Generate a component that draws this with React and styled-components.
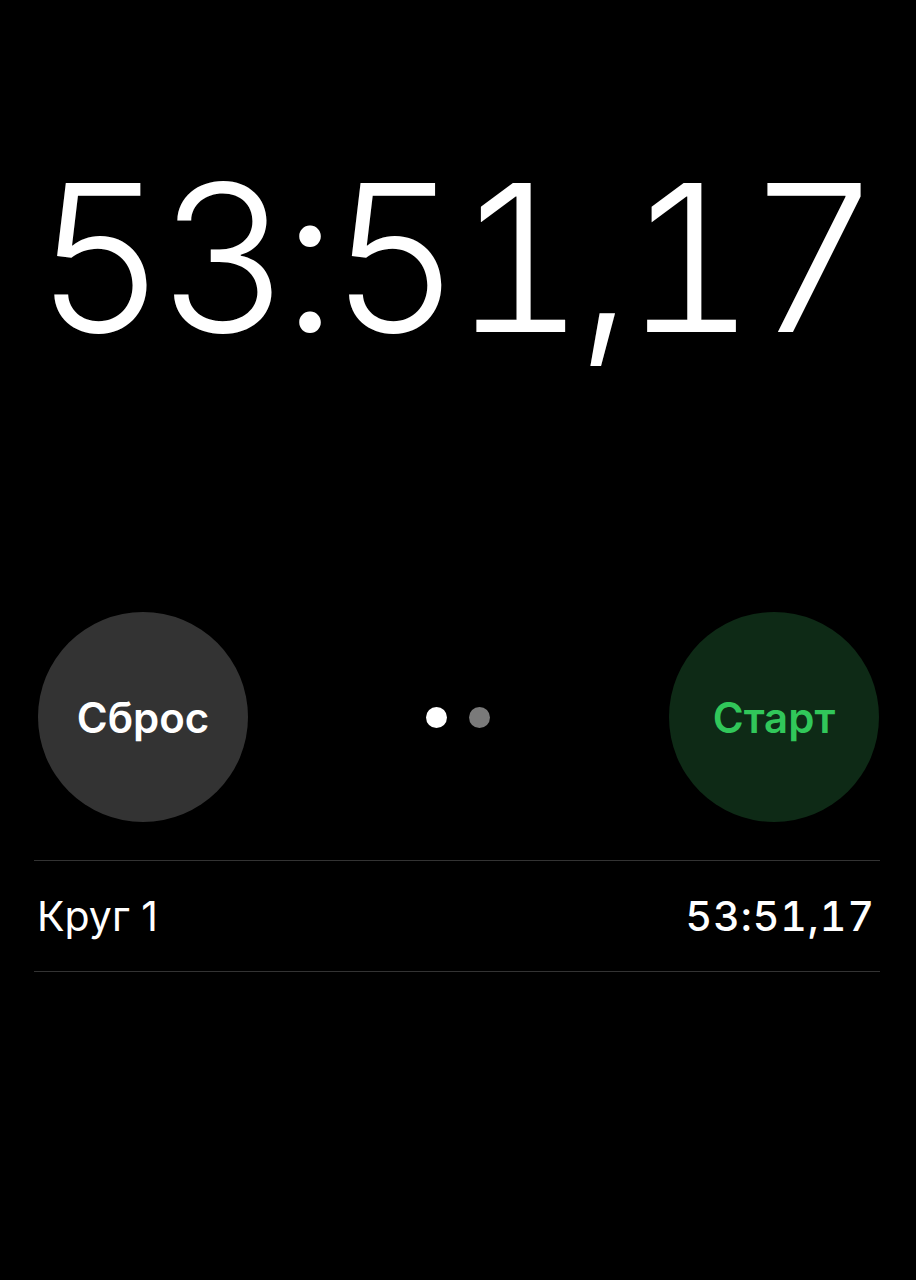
import React from 'react'
import styled, { createGlobalStyle } from 'styled-components'

const GlobalStyle = createGlobalStyle`
    html, body {
        margin: 0;
        padding: 0;
        background: #000;
    }
    body {
        font-family: Inter, "Noto Sans", "Liberation Sans", sans-serif;
        color: #fff;
    }
`

const Screen = styled.div`
    width: 916px;
    height: 1280px;
    box-sizing: border-box;
    padding: 155px 36px 0 34px;
    background: #000;
    display: flex;
    flex-direction: column;
`

const BigTime = styled.div`
    font-size: 205px;
    line-height: 1;
    font-weight: 280;
    font-variant-numeric: tabular-nums;
    text-align: center;
    letter-spacing: -8.5px;
    height: 205px;
    white-space: nowrap;
    margin-right: 8px;
`

const Controls = styled.div`
    margin-top: 252px;
    padding: 0 1px 0 4px;
    display: flex;
    align-items: center;
    justify-content: space-between;
`

const RoundButton = styled.button`
    width: 210px;
    height: 210px;
    border-radius: 50%;
    border: none;
    padding: 0;
    background: ${({ $variant }) => ($variant === 'start' ? '#0e2a16' : '#333333')};
    color: ${({ $variant }) => ($variant === 'start' ? '#31c75a' : '#ffffff')};
    font-family: Inter, "Noto Sans", sans-serif;
    font-size: 42px;
    font-weight: 600;
    display: flex;
    align-items: center;
    justify-content: center;
`

const Dots = styled.div`
    display: flex;
    gap: 22px;
    margin-left: -2px;
`

const Dot = styled.span`
    width: 21px;
    height: 21px;
    border-radius: 50%;
    background: ${({ $active }) => ($active ? '#ffffff' : '#7a7a7a')};
`

const LapList = styled.div`
    margin-top: 38px;
    border-top: 1px solid #333;
`

const LapRow = styled.div`
    height: 110px;
    border-bottom: 1px solid #333;
    display: flex;
    align-items: center;
    justify-content: space-between;
    padding: 0 6px 0 3px;
    font-size: 41px;
`

const LapName = styled.span`
    font-weight: 400;
`

const LapTime = styled.span`
    font-weight: 500;
    font-variant-numeric: tabular-nums;
    letter-spacing: 1px;
    margin-right: -1px;
`

const App = () => {
    const laps = [{ name: 'Круг 1', time: '53:51,17' }]

    return (
        <>
            <GlobalStyle />
            <Screen>
                <BigTime>53:51,17</BigTime>
                <Controls>
                    <RoundButton>Сброс</RoundButton>
                    <Dots>
                        <Dot $active />
                        <Dot />
                    </Dots>
                    <RoundButton $variant="start">Старт</RoundButton>
                </Controls>
                <LapList>
                    {laps.map((lap) => (
                        <LapRow key={lap.name}>
                            <LapName>{lap.name}</LapName>
                            <LapTime>{lap.time}</LapTime>
                        </LapRow>
                    ))}
                </LapList>
            </Screen>
        </>
    )
}

export default App
